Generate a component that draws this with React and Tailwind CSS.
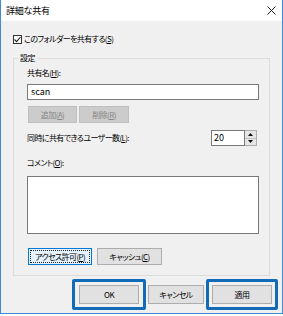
import React from 'react';

const font = { fontFamily: '"Noto Sans CJK JP", "Liberation Sans", sans-serif' };

function Key({ k }) {
  return (
    <>
      (<span className="underline underline-offset-[1px]">{k}</span>)
    </>
  );
}

export default function App() {
  return (
    <div
      className="w-[283px] h-[314px] bg-[#f0f0f0] border-x border-b border-[#3f8bd8] flex flex-col text-[8px] leading-[12px] tracking-[-0.6px] text-black whitespace-nowrap [font-feature-settings:'palt']"
      style={font}
    >
      {/* Title bar */}
      <div className="h-[21px] bg-white flex items-center justify-between pl-[5px] pr-[5px]">
        <span className="text-[9px] tracking-[-0.2px]">詳細な共有</span>
        <svg width="9" height="9" viewBox="0 0 9 9" className="mr-[1px]">
          <path d="M0.5 0.5L8.5 8.5M8.5 0.5L0.5 8.5" stroke="#222" strokeWidth="1" />
        </svg>
      </div>

      {/* Body */}
      <div className="flex flex-col px-[12px]">
        <div className="mt-[12px] h-[12px] flex items-center gap-[2px]">
          <span className="w-[9px] h-[9px] border border-[#333] bg-white flex items-center justify-center">
            <svg width="7" height="7" viewBox="0 0 7 7">
              <path d="M0.5 3.5L2.6 5.6L6.5 1" stroke="#222" strokeWidth="1.1" fill="none" />
            </svg>
          </span>
          <span>
            このフォルダーを共有する<Key k="S" />
          </span>
        </div>

        {/* Group box */}
        <div className="relative mt-[13px] border border-[#dcdcdc] pl-[13px] pr-[10px] pt-[8px] pb-[10px] flex flex-col">
          <span className="absolute -top-[7px] left-[4px] px-[2px] bg-[#f0f0f0]">設定</span>
          <div className="h-[12px]">
            共有名<Key k="H" />:
          </div>
          <div className="mt-[5px] h-[16px] border border-[#7a7a7a] bg-white flex items-center pl-[3px] text-[9px] tracking-normal">
            scan
          </div>
          <div className="mt-[6px] flex gap-[2px] pl-[1px]">
            <div className="w-[49px] h-[17px] bg-[#cccccc] border border-[#bfbfbf] text-[#838383] flex items-center justify-center">
              <span>追加<Key k="A" /></span>
            </div>
            <div className="w-[50px] h-[17px] bg-[#cccccc] border border-[#bfbfbf] text-[#838383] flex items-center justify-center">
              <span>削除<Key k="R" /></span>
            </div>
          </div>
          <div className="mt-[7px] h-[16px] flex items-center justify-between pr-[2px]">
            <span>
              同時に共有できるユーザー数<Key k="L" />:
            </span>
            <div className="flex h-[16px]">
              <div className="w-[34px] h-[16px] border border-[#7a7a7a] bg-white flex items-center pl-[2px] text-[9px] tracking-normal">
                20
              </div>
              <div className="w-[12px] h-[16px] border border-[#adadad] border-l-0 flex flex-col">
                <div className="flex-1 bg-[#e5e5e5] border-b border-[#c4c4c4] flex items-center justify-center">
                  <svg width="5" height="3" viewBox="0 0 5 3">
                    <path d="M0 3L2.5 0L5 3Z" fill="#111" />
                  </svg>
                </div>
                <div className="flex-1 bg-[#e5e5e5] flex items-center justify-center">
                  <svg width="5" height="3" viewBox="0 0 5 3">
                    <path d="M0 0L2.5 3L5 0Z" fill="#111" />
                  </svg>
                </div>
              </div>
            </div>
          </div>
          <div className="mt-[11px] h-[12px]">
            コメント<Key k="O" />:
          </div>
          <div className="mt-[7px] h-[58px] border border-[#7a7a7a] bg-white" />
          <div className="mt-[14px] flex gap-[5px] pl-[1px]">
            <div className="w-[64px] h-[17px] bg-[#e5f1fb] border border-[#0078d7] p-[1px] flex">
              <div className="flex-1 border border-dotted border-[#222] flex items-center justify-center">
                <span>アクセス許可<Key k="P" /></span>
              </div>
            </div>
            <div className="w-[65px] h-[17px] bg-[#e1e1e1] border border-[#adadad] flex items-center justify-center">
              <span>キャッシュ<Key k="C" /></span>
            </div>
          </div>
        </div>
      </div>

      {/* Bottom buttons */}
      <div className="mt-[3px] flex justify-end items-center gap-[2px] pr-[4px]">
        <div className="w-[74px] h-[31px] border-[3px] border-[#126bb6] rounded-[2px] flex items-center justify-center">
          <div className="w-[60px] h-[19px] bg-[#e1e1e1] border border-[#adadad] flex items-center justify-center">
            OK
          </div>
        </div>
        <div className="w-[56px] h-[19px] bg-[#e1e1e1] border border-[#adadad] flex items-center justify-center">
          キャンセル
        </div>
        <div className="w-[72px] h-[31px] border-[3px] border-[#126bb6] rounded-[2px] flex items-center justify-center">
          <div className="w-[60px] h-[19px] bg-[#e1e1e1] border border-[#adadad] flex items-center justify-center">
            適用
          </div>
        </div>
      </div>
    </div>
  );
}
